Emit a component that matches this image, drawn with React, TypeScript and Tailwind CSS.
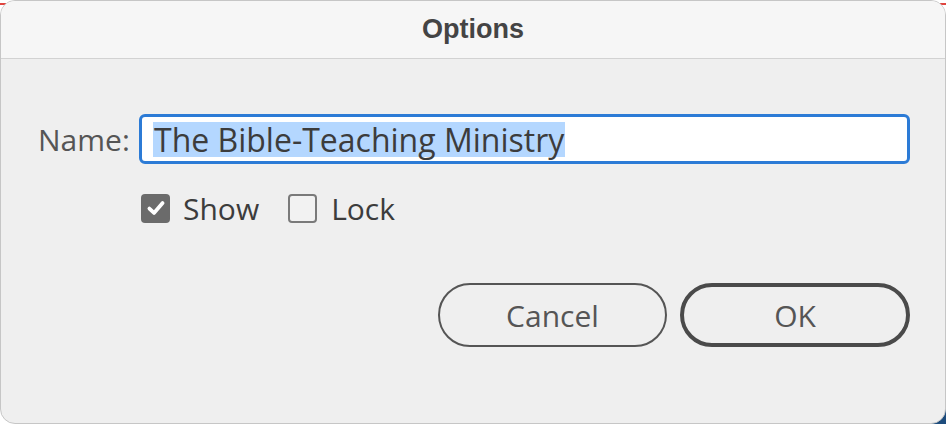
export default function App() {
  return (
    <div className="relative w-[946px] h-[424px] bg-white overflow-hidden">
      {/* background behind the window */}
      <div className="absolute right-0 bottom-0 w-[30px] h-[30px] bg-[#1d4c7d]" />
      <div className="absolute left-0 top-[3px] w-[10px] h-[2px] bg-[#e0453f]" />
      <div className="absolute left-[24px] top-0 w-[1px] h-[3px] bg-[#e0453f]" />
      <div className="absolute left-[376px] top-0 w-[1px] h-[3px] bg-[#e0453f]" />
      <div className="absolute right-0 top-[3px] w-[12px] h-[2px] bg-[#e0453f]" />

      {/* Dialog window */}
      <div
        className="relative h-full flex flex-col rounded-[15px] border border-[#c6c6c6] bg-[#efefef] overflow-hidden"
        style={{ fontFamily: "'Open Sans', 'Noto Sans', sans-serif" }}
      >
        <div className="h-[58px] shrink-0 flex items-center justify-center bg-[#f6f6f6] border-b border-[#d2d2d2]">
          <span
            className="text-[27px] font-bold text-[#444444]"
            style={{ fontFamily: "'Liberation Sans', Arial, sans-serif" }}
          >
            Options
          </span>
        </div>

        <div className="flex flex-col pt-[55px] pl-[37px] pr-[35px]">
          {/* Name row */}
          <div className="flex items-center">
            <span className="w-[101px] text-[30px] text-[#555555]">Name:</span>
            <div className="flex-1 h-[50px] flex items-center rounded-[6px] border-[3px] border-[#2c7bd6] bg-white pl-[11px]">
              <span className="bg-[#b4d7ff] text-[32px] text-[#3c3c3c] leading-[35px] px-[1px]">
                The Bible-Teaching Ministry
              </span>
            </div>
          </div>

          {/* Checkboxes */}
          <div className="flex items-center ml-[103px] mt-[29px] h-[30px]">
            <div className="w-[29px] h-[29px] rounded-[4px] bg-[#6b6b6b] flex items-center justify-center">
              <svg width="22" height="22" viewBox="0 0 20 20" fill="none">
                <path d="M4 10.5 L8.2 14.5 L16 5.5" stroke="white" strokeWidth="3.4" strokeLinecap="round" strokeLinejoin="round" />
              </svg>
            </div>
            <span className="ml-[13px] text-[30px] text-[#3c3c3c]">Show</span>
            <div className="ml-[29px] w-[29px] h-[29px] rounded-[4px] border-2 border-[#7a7a7a] bg-[#f2f2f2]" />
            <span className="ml-[14px] text-[30px] text-[#3c3c3c]">Lock</span>
          </div>

          {/* Buttons */}
          <div className="flex justify-end gap-[13px] mt-[60px]">
            <button className="w-[229px] h-[64px] rounded-full border-2 border-[#555555] text-[30px] text-[#555555]">
              Cancel
            </button>
            <button className="w-[230px] h-[64px] rounded-full border-4 border-[#4a4a4a] text-[30px] text-[#555555]">
              OK
            </button>
          </div>
        </div>
      </div>
    </div>
  );
}
